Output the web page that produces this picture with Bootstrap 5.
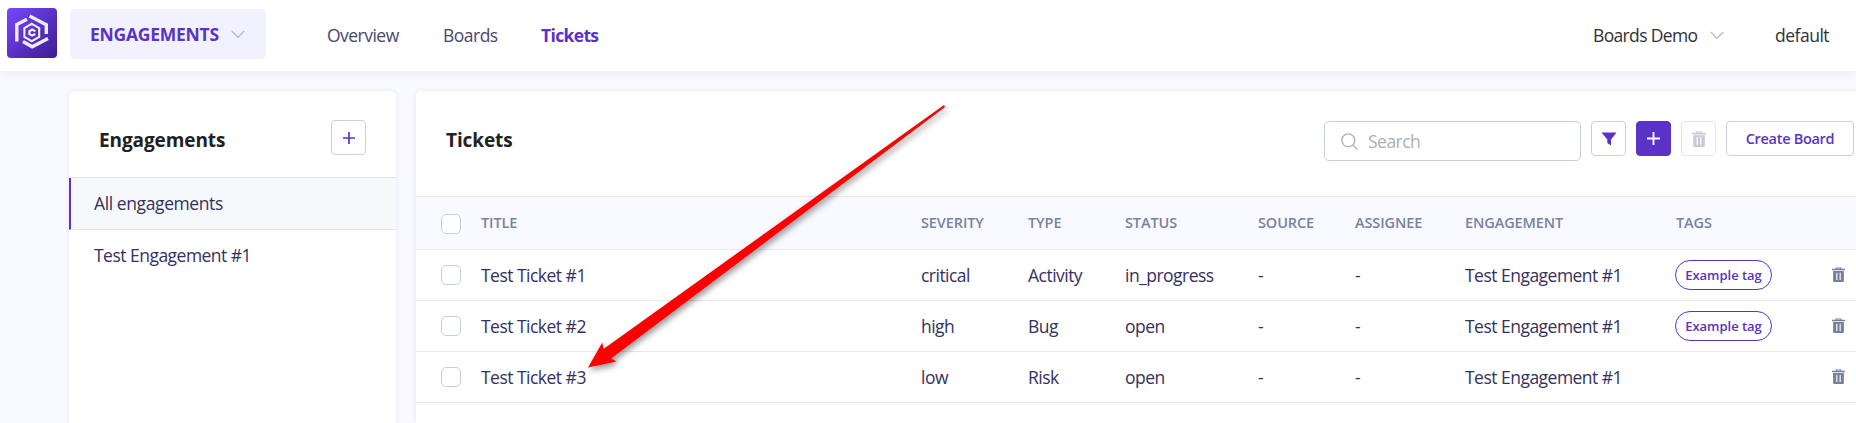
<!DOCTYPE html>
<html lang="en">
<head>
<meta charset="utf-8">
<meta name="viewport" content="width=device-width, initial-scale=1">
<title>Tickets</title>
<link href="https://cdn.jsdelivr.net/npm/bootstrap@5.3.0/dist/css/bootstrap.min.css" rel="stylesheet">
<style>
  :root { --brand: #5a32c8; --line: #e6e8ee; --ink: #35315c; }
  body { font-family: "Open Sans", "Noto Sans", sans-serif; font-size: 17.5px; letter-spacing: -.52px; color: var(--ink); background: #f9faff; height: 423px; overflow: hidden; }
  svg { display: block; flex: none; }
  .topbar { height: 71px; background: #fff; box-shadow: 0 2px 10px rgba(60,60,140,.09); padding-left: 7px; padding-bottom: 4px; position: relative; }
  .logo { width: 50px; height: 50px; border-radius: 4px; background: linear-gradient(135deg, #7748ff, #5a32c8 50%, #3e1c90); margin-top: -1px; }
  .switcher { width: 196px; height: 50px; margin-left: 13px; padding-left: 20px; border-radius: 5px; background: #f2f1ff; color: var(--brand); font-weight: 700; letter-spacing: -.25px; margin-top: 1px; border: 0; }
  .topbar .nav { padding-top: 4px; letter-spacing: -.52px; }
  .topbar .nav-link { padding: 0; color: #49466b; }
  .topbar .nav-link.active { color: var(--brand); font-weight: 700; letter-spacing: -.65px; }
  .account { color: #303036; letter-spacing: -.65px; padding-top: 3px; }
  .panel { background: #fff; border-radius: 5px 5px 0 0; box-shadow: 0 0 4px rgba(60,50,150,.12); height: 332px; }
  .side { width: 327px; flex: none; }
  .side-head { height: 87px; padding: 12px 30px 0 30px; border-bottom: 1px solid #e2e4e8; }
  .panel h2 { font-size: 19px; font-weight: 700; letter-spacing: -.1px; color: #212124; margin: 0; }
  .side-item { height: 51px; padding: 0 0 0 23px; border: 0; border-left: 2px solid transparent; color: var(--ink); background: #fff; text-decoration: none; display: flex; align-items: center; }
  .side-item.chosen { height: 52px; border-left-color: var(--brand); background: #f5f9fc; border-bottom: 1px solid var(--line); letter-spacing: -.4px; }
  .tool { width: 35px; height: 35px; padding: 0; display: flex; align-items: center; justify-content: center; border: 1px solid #d0c9ee; border-radius: 4px; color: var(--brand); background: #fff; flex: none; }
  .tool.solid { background: var(--brand); border-color: var(--brand); color: #fff; }
  .tool.off { border-color: #e2e4ec; color: #c9c9da; }
  .tool.wide { width: 128px; font-size: 14.5px; font-weight: 600; letter-spacing: -.3px; }
  .main { width: 1460px; flex: none; }
  .main-head { height: 105px; padding: 30px 22px 0 30px; }
  .search { width: 257px; height: 40px; border: 1px solid #c6ced8; border-radius: 5px; padding-left: 16px; color: #a9b0bb; }
  .tickets { table-layout: fixed; width: 1460px; margin: 0; border-collapse: separate; border-spacing: 0; --bs-table-bg: transparent; }
  .tickets > * > tr > * { padding: 0 0 1px; height: 51px; border: 0; border-bottom: 1px solid var(--line); vertical-align: middle; color: var(--ink); white-space: nowrap; line-height: 24px; }
  .tickets > thead > tr > * { height: 54px; border-top: 1px solid var(--line); background: #f9faff; color: #7782a0; font-size: 14.5px; font-weight: 600; letter-spacing: -.1px; }
  .tickets .form-check-input { width: 20px; height: 20px; margin: 1px 0 0 25px; border: 1px solid #c6ced8; border-radius: 5px; display: block; background-color: #fff; }
  .tickets thead .form-check-input { margin-top: 3px; }
  .tickets .row-bin { color: #77809b; }
  .pill { display: flex; align-items: center; justify-content: center; width: 97px; height: 30px; border: 1px solid var(--brand); border-radius: 15px; color: var(--brand); font-size: 13px; font-weight: 600; letter-spacing: -.02px; margin-left: -1px; padding-top: 1px; }
  .pointer { position: absolute; left: 580px; top: 95px; pointer-events: none; filter: drop-shadow(2px 3px 3px rgba(0,0,0,.42)); }
</style>
</head>
<body>
<svg width="0" height="0" class="position-absolute">
  <symbol id="chev" viewBox="0 0 14 9"><path d="M.7.9 7 7.3 13.3.9" fill="none" stroke="#b4b9c3" stroke-width="1.3"/></symbol>
  <symbol id="plus" viewBox="0 0 12 12"><path d="M6 0v12M0 6h12" stroke="currentColor" stroke-width="1.7"/></symbol>
  <symbol id="bin" viewBox="0 0 14 16"><path d="M4.5 2V1h5v1" fill="none" stroke="currentColor" stroke-width="1.2"/><path fill="currentColor" fill-rule="evenodd" d="M0 1.8h14v1.7H0zM1.2 4.2h11.6V15q0 1-1 1H2.200q-1 0-1-1zM4.600 6v8h1.200V6zM8.200 6v8h1.200V6z"/></symbol>
</svg>

<nav class="topbar d-flex align-items-center">
  <div class="logo d-flex align-items-center justify-content-center">
    <svg width="50" height="50" viewBox="0 0 50 50" fill="none" stroke="#f0ecff">
      <path d="M20 11.200 9.800 16.500V33.500" stroke-width="3.400"/>
      <path d="M22.500 8 39.300 16.800V26" stroke-width="3.400"/>
      <path d="M16 33.500 25.200 38.800 41 30.500" stroke-width="3.400"/>
      <path d="M24.800 15.800 32.200 20V29L24.800 33.200 17.400 29V20Z" stroke-width="2.100"/>
      <path d="M28.400 23.200 25.200 21.600 22.400 23.200V26L25.200 27.600 28.400 26" stroke-width="2.200"/>
    </svg>
  </div>
  <button class="switcher d-flex align-items-center"><span>ENGAGEMENTS</span><svg class="ms-auto" style="margin-right:15px" width="14" height="9"><use href="#chev"/></svg></button>
  <div class="nav flex-nowrap" style="margin-left:61px">
    <a class="nav-link" style="width:116px">Overview</a>
    <a class="nav-link" style="width:98px">Boards</a>
    <a class="nav-link active">Tickets</a>
  </div>
  <div class="account ms-auto d-flex align-items-center">
    <span style="width:117px">Boards Demo</span>
    <svg width="14" height="9"><use href="#chev"/></svg>
    <span style="margin-left:51px;width:81px;letter-spacing:-.5px">default</span>
  </div>
</nav>

<div class="d-flex" style="padding:20px 0 0 69px;gap:20px">
  <aside class="panel side">
    <div class="side-head d-flex align-items-center justify-content-between">
      <h2>Engagements</h2>
      <button class="tool" style="margin-top:-5px"><svg width="12" height="12"><use href="#plus"/></svg></button>
    </div>
    <div class="list-group rounded-0">
      <a class="side-item chosen">All engagements</a>
      <a class="side-item">Test Engagement #1</a>
    </div>
  </aside>

  <main class="panel main">
    <div class="main-head d-flex align-items-start">
      <h2 class="me-auto" style="margin-top:8px">Tickets</h2>
      <div class="d-flex align-items-start" style="gap:10px">
        <div class="search d-flex align-items-center">
          <svg width="17" height="17" viewBox="0 0 17 17" fill="none" stroke="#a9b0bb" stroke-width="1.3"><circle cx="7.300" cy="7.300" r="6.500"/><path d="m12 12 4.500 4.500"/></svg>
          <span style="margin-left:10px">Search</span>
        </div>
        <button class="tool"><svg width="16" height="14" viewBox="0 0 16 14"><path d="M.5.500h15L10 7.500V13.500L6.300 11V7.500Z" fill="currentColor"/></svg></button>
        <button class="tool solid"><svg width="13" height="13"><use href="#plus"/></svg></button>
        <button class="tool off"><svg width="14" height="16"><use href="#bin"/></svg></button>
        <button class="tool wide">Create Board</button>
      </div>
    </div>
    <table class="table tickets">
      <colgroup><col style="width:65px"><col style="width:440px"><col style="width:107px"><col style="width:97px"><col style="width:133px"><col style="width:97px"><col style="width:110px"><col style="width:211px"><col style="width:156px"><col></colgroup>
      <thead>
        <tr><th><input class="form-check-input" type="checkbox"></th><th>TITLE</th><th>SEVERITY</th><th>TYPE</th><th>STATUS</th><th>SOURCE</th><th>ASSIGNEE</th><th>ENGAGEMENT</th><th>TAGS</th><th></th></tr>
      </thead>
      <tbody>
        <tr><td><input class="form-check-input" type="checkbox"></td><td>Test Ticket #1</td><td>critical</td><td>Activity</td><td>in_progress</td><td>-</td><td>-</td><td>Test Engagement #1</td><td><span class="pill">Example tag</span></td><td class="row-bin"><svg width="13" height="15"><use href="#bin"/></svg></td></tr>
        <tr><td><input class="form-check-input" type="checkbox"></td><td>Test Ticket #2</td><td>high</td><td>Bug</td><td>open</td><td>-</td><td>-</td><td>Test Engagement #1</td><td><span class="pill">Example tag</span></td><td class="row-bin"><svg width="13" height="15"><use href="#bin"/></svg></td></tr>
        <tr><td><input class="form-check-input" type="checkbox"></td><td>Test Ticket #3</td><td>low</td><td>Risk</td><td>open</td><td>-</td><td>-</td><td>Test Engagement #1</td><td></td><td class="row-bin"><svg width="13" height="15"><use href="#bin"/></svg></td></tr>
      </tbody>
    </table>
  </main>
</div>

<svg class="pointer" width="375" height="285" viewBox="580 95 375 285"><path d="M588 367.500 602.300 342.500 603.500 349 944 105 945 107 611 358.500 616.500 361.500Z" fill="#f00"/></svg>
<script src="https://cdn.jsdelivr.net/npm/bootstrap@5.3.0/dist/js/bootstrap.bundle.min.js"></script>
</body>
</html>
